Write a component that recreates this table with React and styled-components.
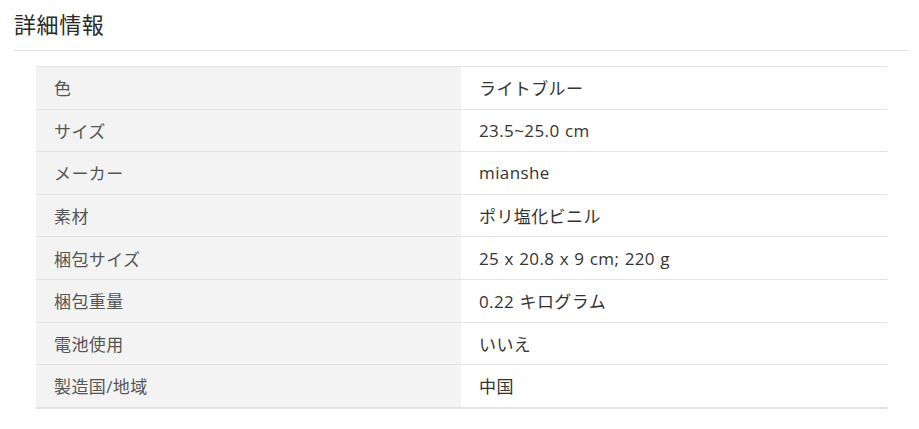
import React from "react";
import styled, { createGlobalStyle } from "styled-components";

const Global = createGlobalStyle`
  html, body { margin: 0; padding: 0; background: #fff; }
  body { font-family: "Open Sans", "Noto Sans CJK JP", sans-serif; }
`;

const Page = styled.div`
  padding: 0 10px 0 14px;
`;

const Heading = styled.h2`
  margin: 0;
  padding: 8px 0 0;
  height: 51px;
  box-sizing: border-box;
  font-size: 22px;
  letter-spacing: 0.6px;
  font-weight: 400;
  color: #2a2a2a;
  line-height: 30px;
  font-family: "Noto Sans CJK JP", sans-serif;
  border-bottom: 1px solid #e0e0e0;
`;

const Table = styled.div`
  margin: 15px 22px 0;
  display: grid;
  grid-template-columns: 425px 1fr;
  border-top: 1px solid #e3e3e3;
  border-bottom: 2px solid #e3e3e3;
`;

const Cell = styled.div`
  height: 41.6px;
  box-sizing: content-box;
  display: flex;
  align-items: center;
  padding: 0 18px;
  font-size: 17px;
  letter-spacing: 0.4px;
  word-spacing: 0.5px;
  font-family: "Open Sans", "Noto Sans CJK JP", sans-serif;
  background: ${(p) => (p.$label ? "#f3f3f3" : "#fff")};
  color: ${(p) => (p.$label ? "#555" : "#333")};
  border-bottom: ${(p) => (p.$last ? "none" : "1px solid #e3e3e3")};
`;

const rows = [
  ["色", "ライトブルー"],
  ["サイズ", "23.5~25.0 cm"],
  ["メーカー", "mianshe"],
  ["素材", "ポリ塩化ビニル"],
  ["梱包サイズ", "25 x 20.8 x 9 cm; 220 g"],
  ["梱包重量", "0.22 キログラム"],
  ["電池使用", "いいえ"],
  ["製造国/地域", "中国"],
];

export default function App() {
  return (
    <Page>
      <Global />
      <Heading>詳細情報</Heading>
      <Table>
        {rows.map(([k, v], i) => (
          <React.Fragment key={k}>
            <Cell $label $last={i === rows.length - 1}>{k}</Cell>
            <Cell $last={i === rows.length - 1}>{v}</Cell>
          </React.Fragment>
        ))}
      </Table>
    </Page>
  );
}
